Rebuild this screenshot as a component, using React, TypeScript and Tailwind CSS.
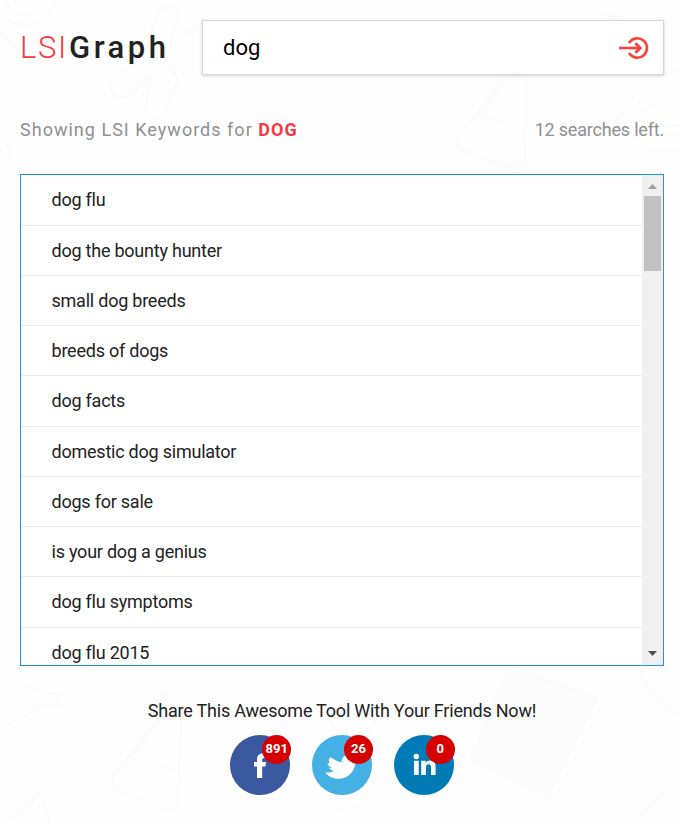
const keywords = [
  "dog flu",
  "dog the bounty hunter",
  "small dog breeds",
  "breeds of dogs",
  "dog facts",
  "domestic dog simulator",
  "dogs for sale",
  "is your dog a genius",
  "dog flu symptoms",
  "dog flu 2015",
];

const FacebookIcon = () => (
  <svg width="60" height="60" viewBox="0 0 60 60" fill="currentColor">
    <path d="M27 43V31.400H24V27h3v-2.600c0-3.700 2-5.900 5.600-5.900 1.600 0 2.900.2 3.300.3v4.300h-1.700c-1.600 0-2 .7-2 2V27h3.800l-.6 4.400h-3.200V43z" />
  </svg>
);

// Older bird with a pointed wing and a low tail
const TwitterIcon = () => (
  <svg width="60" height="60" viewBox="0 0 60 60" fill="currentColor">
    <path d="M13.200 37.200c3 .7 6.500.2 8.600-1.500-1.900-.3-3.700-1.300-4.500-3 .9.200 1.700.1 2.500-.2-2.500-.8-4.100-2.400-4.300-4.600.8.400 1.600.6 2.400.6-1.700-1.900-1.300-4.300.2-6.300 3.800 3.300 7.500 5 11.500 5.900-.4-4.600 2.400-8.200 6.700-8.200 2.300 0 4 .9 5.200 2.300 1.500-.3 2.800-.7 4-1.300-.4 1.400-1.200 2.300-2.200 3 1.100-.1 2.100-.3 3-.7-.7 1.200-1.700 2.200-2.900 3 0 10.200-7.200 17.500-17 17.500-5.300 0-10.500-2.100-13.200-6.500z" />
    <path d="M19 22.500c2.200 5 6.200 8.500 11 9.500l3-4c-5-.2-10-2.500-14-5.500z" />
  </svg>
);

const LinkedinIcon = () => (
  <svg width="60" height="60" viewBox="0 0 60 60" fill="currentColor">
    <circle cx="22.300" cy="21.500" r="2.700" />
    <path d="M20 25.700h4.700V40H20zM27.200 25.700h4.500v2c.8-1.400 2.300-2.300 4.400-2.300 4.400 0 5.500 2.800 5.500 6.700V40H37v-7c0-1.900-.3-3.700-2.400-3.700-2.200 0-2.700 1.700-2.700 3.700v7h-4.700z" />
  </svg>
);

const socials = [
  { name: "Facebook", count: 891, color: "bg-[#3a589e]", icon: <FacebookIcon /> },
  { name: "Twitter", count: 26, color: "bg-[#45b0e3]", icon: <TwitterIcon /> },
  { name: "LinkedIn", count: 0, color: "bg-[#007bb6]", icon: <LinkedinIcon /> },
];

// Faint stationery doodles behind the page
const Doodles = () => (
  <svg
    className="absolute inset-0 w-full h-full pointer-events-none"
    viewBox="0 0 680 822"
    fill="none"
    stroke="#fafafa"
    strokeWidth="2"
  >
    <circle cx="25" cy="-5" r="30" />
    <circle cx="25" cy="-5" r="20" />
    <path d="M0 32 35 65M-5 135q20 12 14 28" />
    <path d="M158 10q12-8 20 4l-12 46 12 20-14 34q-10 10-18-2l4-36-20 20q-16 6-20-10l36-34zM205 20l-40 30" />
    <path d="M504 78 462 132q-10 14 4 20l46 16q12 2 13-10l1-80M480 115l40 14M478 116l34-42" />
    <path d="M161 693l19 27M181 720l-3 78q0 12-14 10l-45-16q-10-6-6-16l48-60M132 758l44 13M134 754l28-38M161 693l32 10" />
    <path d="M0 727 45 705q14 4 14-5t-14-6L0 675M30 678q-6-12 8-2M8 822l30-30 12 30M20 822l18-28" />
    <path d="M510 665 597 698 548 797 470 760z" fill="#fcfcfc" stroke="#fbfbfb" />
    <path d="M515 670l78 28M512 676l76 28" stroke="#fbfbfb" />
    <path d="M640 668q5 30 40 45M635 822l30-30 10 6 5-4" />
    <path d="M680 72 650 74 616 122M680 80 624 125l24 25h32M645 125h35M650 135h30" />
    <path d="M595 10q16 12 36 2M330 722q20 20 38 14l8-16M400 725l10 14M340 810l24-6" />
  </svg>
);

const Header = () => (
  <header className="flex h-[55px] items-center justify-between">
    <div className="flex items-center leading-none text-[#222]">
      <span className="text-[31px] font-light tracking-[1.7px] text-[#fb3b3d]">LSI</span>
      <span className="ml-px text-[31px] font-medium tracking-[3.5px]">Graph</span>
    </div>
    <div className="flex h-[55px] w-[462px] items-center justify-between border border-[#d8d8d8] bg-white pl-5 pr-[13px] shadow-[0_1px_3px_rgba(0,0,0,0.18)]">
      <span className="text-[22px] text-black">dog</span>
      <svg width="32" height="24" viewBox="0 0 32 24" fill="none" stroke="#f9423a" strokeWidth="2.6">
        <path d="M11.500 6.200a9.700 9.700 0 1 1 0 11.600" strokeLinecap="round" />
        <path d="M1 12h21" />
        <path d="m17.500 7.300 4.700 4.700-4.700 4.700" strokeWidth="3" />
      </svg>
    </div>
  </header>
);

const KeywordList = () => (
  <div className="mt-[30px] flex h-[492px] overflow-hidden border border-[#2491eb] bg-white">
    <ul className="flex-1 pt-[0.4px]">
      {keywords.map((keyword) => (
        <li
          key={keyword}
          className="h-[50.25px] border-b border-[#ebebeb] pl-[30.5px] text-lg leading-[49px] tracking-[-0.23px] text-[#222]"
        >
          {keyword}
        </li>
      ))}
    </ul>
    {/* Scrollbar */}
    <div className="flex w-[21px] flex-col items-center justify-between bg-[#f0f0f0] pb-[9px] pt-[9px]">
      <div className="flex flex-col items-center">
        <svg width="9" height="5" viewBox="0 0 9 5" fill="#a0a0a0">
          <path d="M0 5 4.500 0 9 5z" />
        </svg>
        <div className="mt-[7px] h-[75px] w-[17px] bg-[#c1c1c1]" />
      </div>
      <svg width="9" height="5" viewBox="0 0 9 5" fill="#505050">
        <path d="M0 0 4.500 5 9 0z" />
      </svg>
    </div>
  </div>
);

const Share = () => (
  <section className="mt-[31px] flex flex-col items-center">
    <p className="text-lg leading-7 tracking-[-0.21px] text-[#222]">
      Share This Awesome Tool With Your Friends Now!
    </p>
    <div className="mt-[10px] flex gap-[21.75px]">
      {socials.map((social) => (
        <button
          key={social.name}
          aria-label={social.name}
          className={`relative flex h-[60px] w-[60px] items-center justify-center rounded-full text-white ${social.color}`}
        >
          {social.icon}
          <span className="absolute -right-px top-0 flex h-[29px] w-[29px] items-center justify-center rounded-full bg-[#d70000] pb-0.5 text-[13px] font-bold">
            {social.count}
          </span>
        </button>
      ))}
    </div>
  </section>
);

const App = () => {
  return (
    <div className="relative h-[822px] w-[680px] overflow-hidden bg-[#fefefe] font-[Roboto]">
      <Doodles />
      <main className="relative pl-5 pr-4 pt-5">
        <Header />
        <div className="mt-[41px] flex h-7 items-center justify-between text-lg text-[#909090]">
          <p className="tracking-[1.02px]">
            Showing LSI Keywords for <span className="font-bold text-[#f63b3f]">DOG</span>
          </p>
          <p className="tracking-[-0.2px]">12 searches left.</p>
        </div>
        <KeywordList />
        <Share />
      </main>
    </div>
  );
};

export default App;
